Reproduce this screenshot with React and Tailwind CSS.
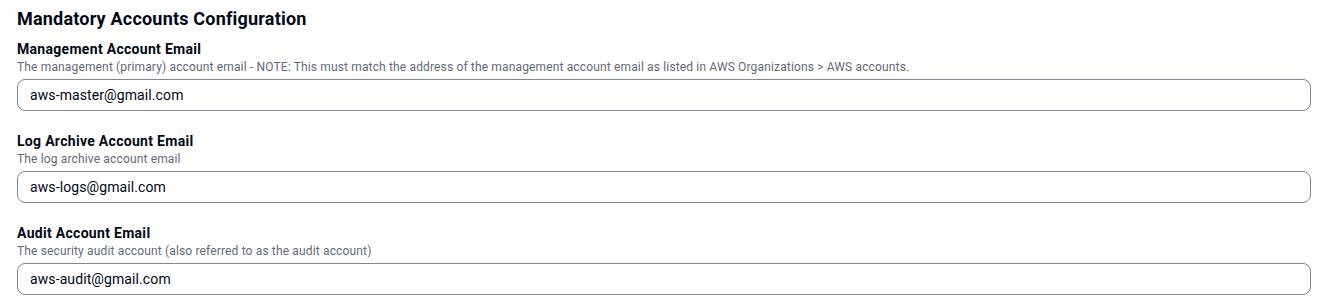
const fields = [
  {
    label: "Management Account Email",
    description:
      "The management (primary) account email - NOTE: This must match the address of the management account email as listed in AWS Organizations > AWS accounts.",
    value: "aws-master@gmail.com",
  },
  {
    label: "Log Archive Account Email",
    description: "The log archive account email",
    value: "aws-logs@gmail.com",
  },
  {
    label: "Audit Account Email",
    description: "The security audit account (also referred to as the audit account)",
    value: "aws-audit@gmail.com",
  },
];

function App() {
  return (
    <div
      className="bg-white w-[1326px] h-[303px] pl-[17px] pr-[15px] pt-[8px] text-[#000716]"
      style={{ fontFamily: "Roboto, 'Open Sans', sans-serif" }}
    >
      <h2 className="text-[18px] leading-[22px] font-bold tracking-[0.2px]">
        Mandatory Accounts Configuration
      </h2>
      <div className="mt-[9px] flex flex-col gap-[20px]">
        {fields.map((f) => (
          <div key={f.label}>
            <div className="text-[14px] leading-[20px] font-bold tracking-[0.3px]">
              {f.label}
            </div>
            <div className="text-[12px] leading-[16px] text-[#5f6b7a] tracking-[0.15px]">
              {f.description}
            </div>
            <input
              type="text"
              defaultValue={f.value}
              className="mt-[4px] block w-full h-[32px] px-[12px] text-[14px] tracking-[0.1px] text-[#000716] border border-[#7d8998] rounded-[8px] outline-none bg-white"
            />
          </div>
        ))}
      </div>
    </div>
  );
}

export default App;
